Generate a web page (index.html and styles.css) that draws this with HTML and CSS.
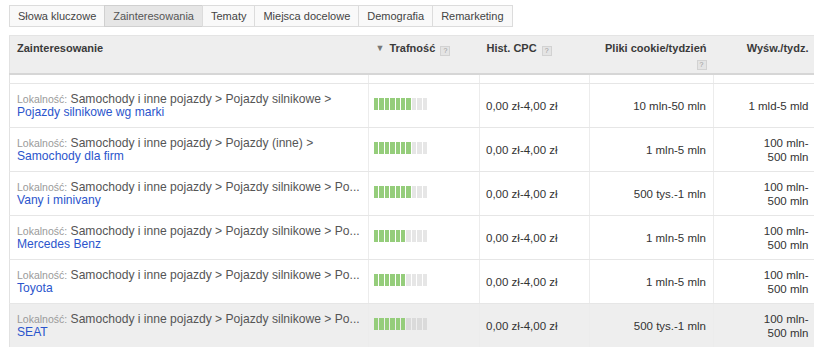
FILE: index.html
```html
<!DOCTYPE html>
<html lang="pl">
<head>
<meta charset="utf-8">
<title>Zainteresowania</title>
<link rel="stylesheet" href="styles.css">
</head>
<body>
<div class="page">
  <div class="tabs">
    <div class="tab">Słowa kluczowe</div>
    <div class="tab active">Zainteresowania</div>
    <div class="tab">Tematy</div>
    <div class="tab">Miejsca docelowe</div>
    <div class="tab">Demografia</div>
    <div class="tab">Remarketing</div>
  </div>
  <table class="grid">
    <colgroup>
      <col class="c1"><col class="c2"><col class="c3"><col class="c4"><col class="c5">
    </colgroup>
    <thead>
      <tr>
        <th class="left">Zainteresowanie</th>
        <th class="left"><span class="sort">&#9660;</span>Trafność <span class="help">?</span></th>
        <th class="left">Hist. CPC <span class="help">?</span></th>
        <th class="right">Pliki cookie/tydzień<br><span class="help">?</span></th>
        <th class="right">Wyśw./tydz.</th>
      </tr>
    </thead>
    <tbody>
      <tr class="spacer"><td></td><td></td><td></td><td></td><td></td></tr>
      <tr>
        <td class="name"><div class="path"><span class="loc">Lokalność:</span> Samochody i inne pojazdy &gt; Pojazdy silnikowe &gt;</div><a class="link">Pojazdy silnikowe wg marki</a></td>
        <td class="rel"><div class="bar"><i class="on"></i><i class="on"></i><i class="on"></i><i class="on"></i><i class="on"></i><i class="on"></i><i class="on"></i><i></i><i></i><i></i></div></td>
        <td class="num">0,00 zł-4,00 zł</td>
        <td class="num right">10 mln-50 mln</td>
        <td class="num right">1 mld-5 mld</td>
      </tr>
      <tr>
        <td class="name"><div class="path"><span class="loc">Lokalność:</span> Samochody i inne pojazdy &gt; Pojazdy (inne) &gt;</div><a class="link">Samochody dla firm</a></td>
        <td class="rel"><div class="bar"><i class="on"></i><i class="on"></i><i class="on"></i><i class="on"></i><i class="on"></i><i class="on"></i><i class="on"></i><i></i><i></i><i></i></div></td>
        <td class="num">0,00 zł-4,00 zł</td>
        <td class="num right">1 mln-5 mln</td>
        <td class="num right">100 mln-<br>500 mln</td>
      </tr>
      <tr>
        <td class="name"><div class="path"><span class="loc">Lokalność:</span> Samochody i inne pojazdy &gt; Pojazdy silnikowe &gt; Po...</div><a class="link">Vany i minivany</a></td>
        <td class="rel"><div class="bar"><i class="on"></i><i class="on"></i><i class="on"></i><i class="on"></i><i class="on"></i><i class="on"></i><i class="on"></i><i></i><i></i><i></i></div></td>
        <td class="num">0,00 zł-4,00 zł</td>
        <td class="num right">500 tys.-1 mln</td>
        <td class="num right">100 mln-<br>500 mln</td>
      </tr>
      <tr>
        <td class="name"><div class="path"><span class="loc">Lokalność:</span> Samochody i inne pojazdy &gt; Pojazdy silnikowe &gt; Po...</div><a class="link">Mercedes Benz</a></td>
        <td class="rel"><div class="bar"><i class="on"></i><i class="on"></i><i class="on"></i><i class="on"></i><i class="on"></i><i class="on"></i><i></i><i></i><i></i><i></i></div></td>
        <td class="num">0,00 zł-4,00 zł</td>
        <td class="num right">1 mln-5 mln</td>
        <td class="num right">100 mln-<br>500 mln</td>
      </tr>
      <tr>
        <td class="name"><div class="path"><span class="loc">Lokalność:</span> Samochody i inne pojazdy &gt; Pojazdy silnikowe &gt; Po...</div><a class="link">Toyota</a></td>
        <td class="rel"><div class="bar"><i class="on"></i><i class="on"></i><i class="on"></i><i class="on"></i><i class="on"></i><i class="on"></i><i></i><i></i><i></i><i></i></div></td>
        <td class="num">0,00 zł-4,00 zł</td>
        <td class="num right">1 mln-5 mln</td>
        <td class="num right">100 mln-<br>500 mln</td>
      </tr>
      <tr class="hover">
        <td class="name"><div class="path"><span class="loc">Lokalność:</span> Samochody i inne pojazdy &gt; Pojazdy silnikowe &gt; Po...</div><a class="link">SEAT</a></td>
        <td class="rel"><div class="bar"><i class="on"></i><i class="on"></i><i class="on"></i><i class="on"></i><i class="on"></i><i class="on"></i><i></i><i></i><i></i><i></i></div></td>
        <td class="num">0,00 zł-4,00 zł</td>
        <td class="num right">500 tys.-1 mln</td>
        <td class="num right">100 mln-<br>500 mln</td>
      </tr>
    </tbody>
  </table>
</div>
</body>
</html>
```

FILE: styles.css
```css
html, body {
  margin: 0;
  padding: 0;
  background: #fff;
  overflow: hidden;
}
body {
  font-family: "Liberation Sans", Arial, sans-serif;
  color: #333;
}
.page {
  padding: 5px 0 0 9px;
}
.tabs {
  display: flex;
  height: 22px;
}
.tab {
  box-sizing: border-box;
  height: 22px;
  line-height: 20px;
  padding: 0 8px;
  font-size: 11px;
  color: #444;
  background: #f9f9f9;
  border: 1px solid #dcdcdc;
  margin-left: -1px;
}
.tab:first-child {
  margin-left: 0;
}
.tab.active {
  background: #e6e6e6;
  border-color: #d0d0d0;
  color: #555;
}
.grid {
  margin-top: 8px;
  border-collapse: collapse;
  table-layout: fixed;
  width: 806px;
  border-left: 1px solid #e2e2e2;
}
.c1 { width: 359px; }
.c2 { width: 111px; }
.c3 { width: 110px; }
.c4 { width: 124px; }
.c5 { width: 102px; }
thead th {
  background: #eeeeee;
  height: 38px;
  box-sizing: border-box;
  padding: 5px 7px 0 7px;
  vertical-align: top;
  font-size: 11px;
  line-height: 14px;
  font-weight: bold;
  color: #3a3a3a;
  border-top: 1px solid #e4e4e4;
  border-bottom: 2px solid #d6d6d6;
}
th.left { text-align: left; }
th.right { text-align: right; }
.sort {
  font-size: 9px;
  color: #777;
  margin-right: 5px;
  position: relative;
  top: -1px;
}
.help {
  display: inline-block;
  box-sizing: border-box;
  width: 10px;
  height: 10px;
  line-height: 8px;
  font-size: 7px;
  font-weight: normal;
  text-align: center;
  color: #999;
  background: #e4e4e4;
  border: 1px solid #d2d2d2;
  vertical-align: -1px;
  margin-left: 2px;
}
tbody td {
  border-bottom: 1px solid #e6e6e6;
  border-left: 1px solid #ececec;
  height: 44px;
  box-sizing: border-box;
  padding: 0 7px 0 6px;
  vertical-align: middle;
  font-size: 11.5px;
}
tbody td:first-child {
  border-left: 0;
}
tbody tr.spacer td {
  height: 10px;
  padding: 0;
}
td.name {
  vertical-align: top;
  padding: 9px 8px 0 7px;
  line-height: 13px;
}
.path {
  white-space: nowrap;
  overflow: hidden;
  font-size: 12.1px;
  color: #555;
}
.loc {
  font-size: 10.5px;
  color: #9a9a9a;
}
.link {
  display: block;
  font-size: 12.1px;
  color: #2b55cc;
  text-decoration: none;
}
.num {
  color: #333;
  line-height: 14px;
}
.num.right {
  text-align: right;
}
td.rel {
  padding-left: 5px;
}
.bar {
  display: flex;
  gap: 1px;
  width: 53px;
  height: 12px;
  margin-top: -3px;
}
.bar i {
  flex: 1;
  background: #e6e6e6;
}
.bar i.on {
  background: #95cd7b;
}
tr.hover td {
  background: #eeeeee;
}
tr.hover .bar i {
  background: #dadada;
}
tr.hover .bar i.on {
  background: #95cd7b;
}
```
